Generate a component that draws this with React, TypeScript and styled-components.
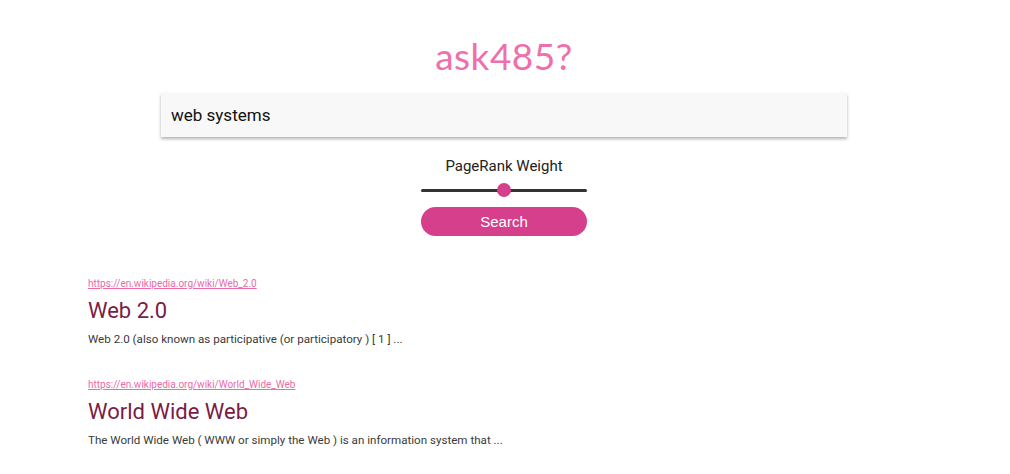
import React from 'react';
import styled, { createGlobalStyle } from 'styled-components';

const GlobalStyle = createGlobalStyle`
  body {
    margin: 0;
    background: #fff;
    font-family: Roboto, "Liberation Sans", sans-serif;
  }
`;

const Page = styled.div`
  display: flex;
  flex-direction: column;
  padding-top: 34px;
`;

const Logo = styled.h1`
  margin: 0;
  padding-right: 2px;
  text-align: center;
  font-family: Lato, "Open Sans", sans-serif;
  font-weight: 400;
  font-size: 37px;
  line-height: 44px;
  letter-spacing: 0.5px;
  color: #ef6fab;
`;

const SearchForm = styled.form`
  display: flex;
  flex-direction: column;
  align-items: center;
  margin-top: 15px;
  padding-right: 2px;
`;

const QueryInput = styled.input`
  box-sizing: border-box;
  width: 686px;
  height: 44px;
  border: none;
  outline: none;
  padding: 0 10px;
  background: #f8f8f8;
  box-shadow: 0 2px 3px rgba(0, 0, 0, 0.3);
  font-family: Roboto, "Liberation Sans", sans-serif;
  font-size: 17px;
  color: #111;
`;

const WeightLabel = styled.div`
  margin-top: 20px;
  font-size: 15px;
  line-height: 19px;
  color: #222;
`;

const SliderWrap = styled.div`
  position: relative;
  width: 166px;
  height: 16px;
  margin-top: 6px;
  display: flex;
  align-items: center;
`;

const Track = styled.div`
  width: 100%;
  height: 3px;
  border-radius: 2px;
  background: #333;
`;

const Thumb = styled.div`
  position: absolute;
  top: 1px;
  width: 14px;
  height: 14px;
  margin-left: -7px;
  border-radius: 50%;
  background: #d63f8c;
`;

const SearchButton = styled.button`
  width: 166px;
  height: 29px;
  margin-top: 9px;
  border: none;
  border-radius: 15px;
  background: #d63f8c;
  color: #fff;
  font-family: "Liberation Sans", Arial, sans-serif;
  font-size: 15px;
`;

const Results = styled.div`
  display: flex;
  flex-direction: column;
  gap: 32px;
  padding-left: 88px;
  margin-top: 42px;
`;

const Result = styled.div`
  display: flex;
  flex-direction: column;
`;

const ResultUrl = styled.a`
  font-size: 10px;
  line-height: 12px;
  color: #ec6aa8;
  text-decoration: underline;
`;

const ResultTitle = styled.div`
  margin-top: 7px;
  font-size: 22px;
  line-height: 28px;
  color: #7a1c46;
`;

const ResultSnippet = styled.p`
  margin: 6px 0 0;
  font-size: 11.6px;
  line-height: 16px;
  color: #3a3a3a;
`;

const results = [
  {
    url: 'https://en.wikipedia.org/wiki/Web_2.0',
    title: 'Web 2.0',
    summary: 'Web 2.0 (also known as participative (or participatory ) [ 1 ] ...',
  },
  {
    url: 'https://en.wikipedia.org/wiki/World_Wide_Web',
    title: 'World Wide Web',
    summary: 'The World Wide Web ( WWW or simply the Web ) is an information system that ...',
  },
];

const App: React.FC = () => {
  const weight = 0.5;
  return (
    <Page>
      <GlobalStyle />
      <Logo>ask485?</Logo>
      <SearchForm onSubmit={(e) => e.preventDefault()}>
        <QueryInput defaultValue="web systems" />
        <WeightLabel>PageRank Weight</WeightLabel>
        <SliderWrap>
          <Track />
          <Thumb style={{ left: `${weight * 100}%` }} />
        </SliderWrap>
        <SearchButton type="submit">Search</SearchButton>
      </SearchForm>
      <Results>
        {results.map((r) => (
          <Result key={r.url}>
            <ResultUrl href={r.url}>{r.url}</ResultUrl>
            <ResultTitle>{r.title}</ResultTitle>
            <ResultSnippet>{r.summary}</ResultSnippet>
          </Result>
        ))}
      </Results>
    </Page>
  );
};

export default App;
